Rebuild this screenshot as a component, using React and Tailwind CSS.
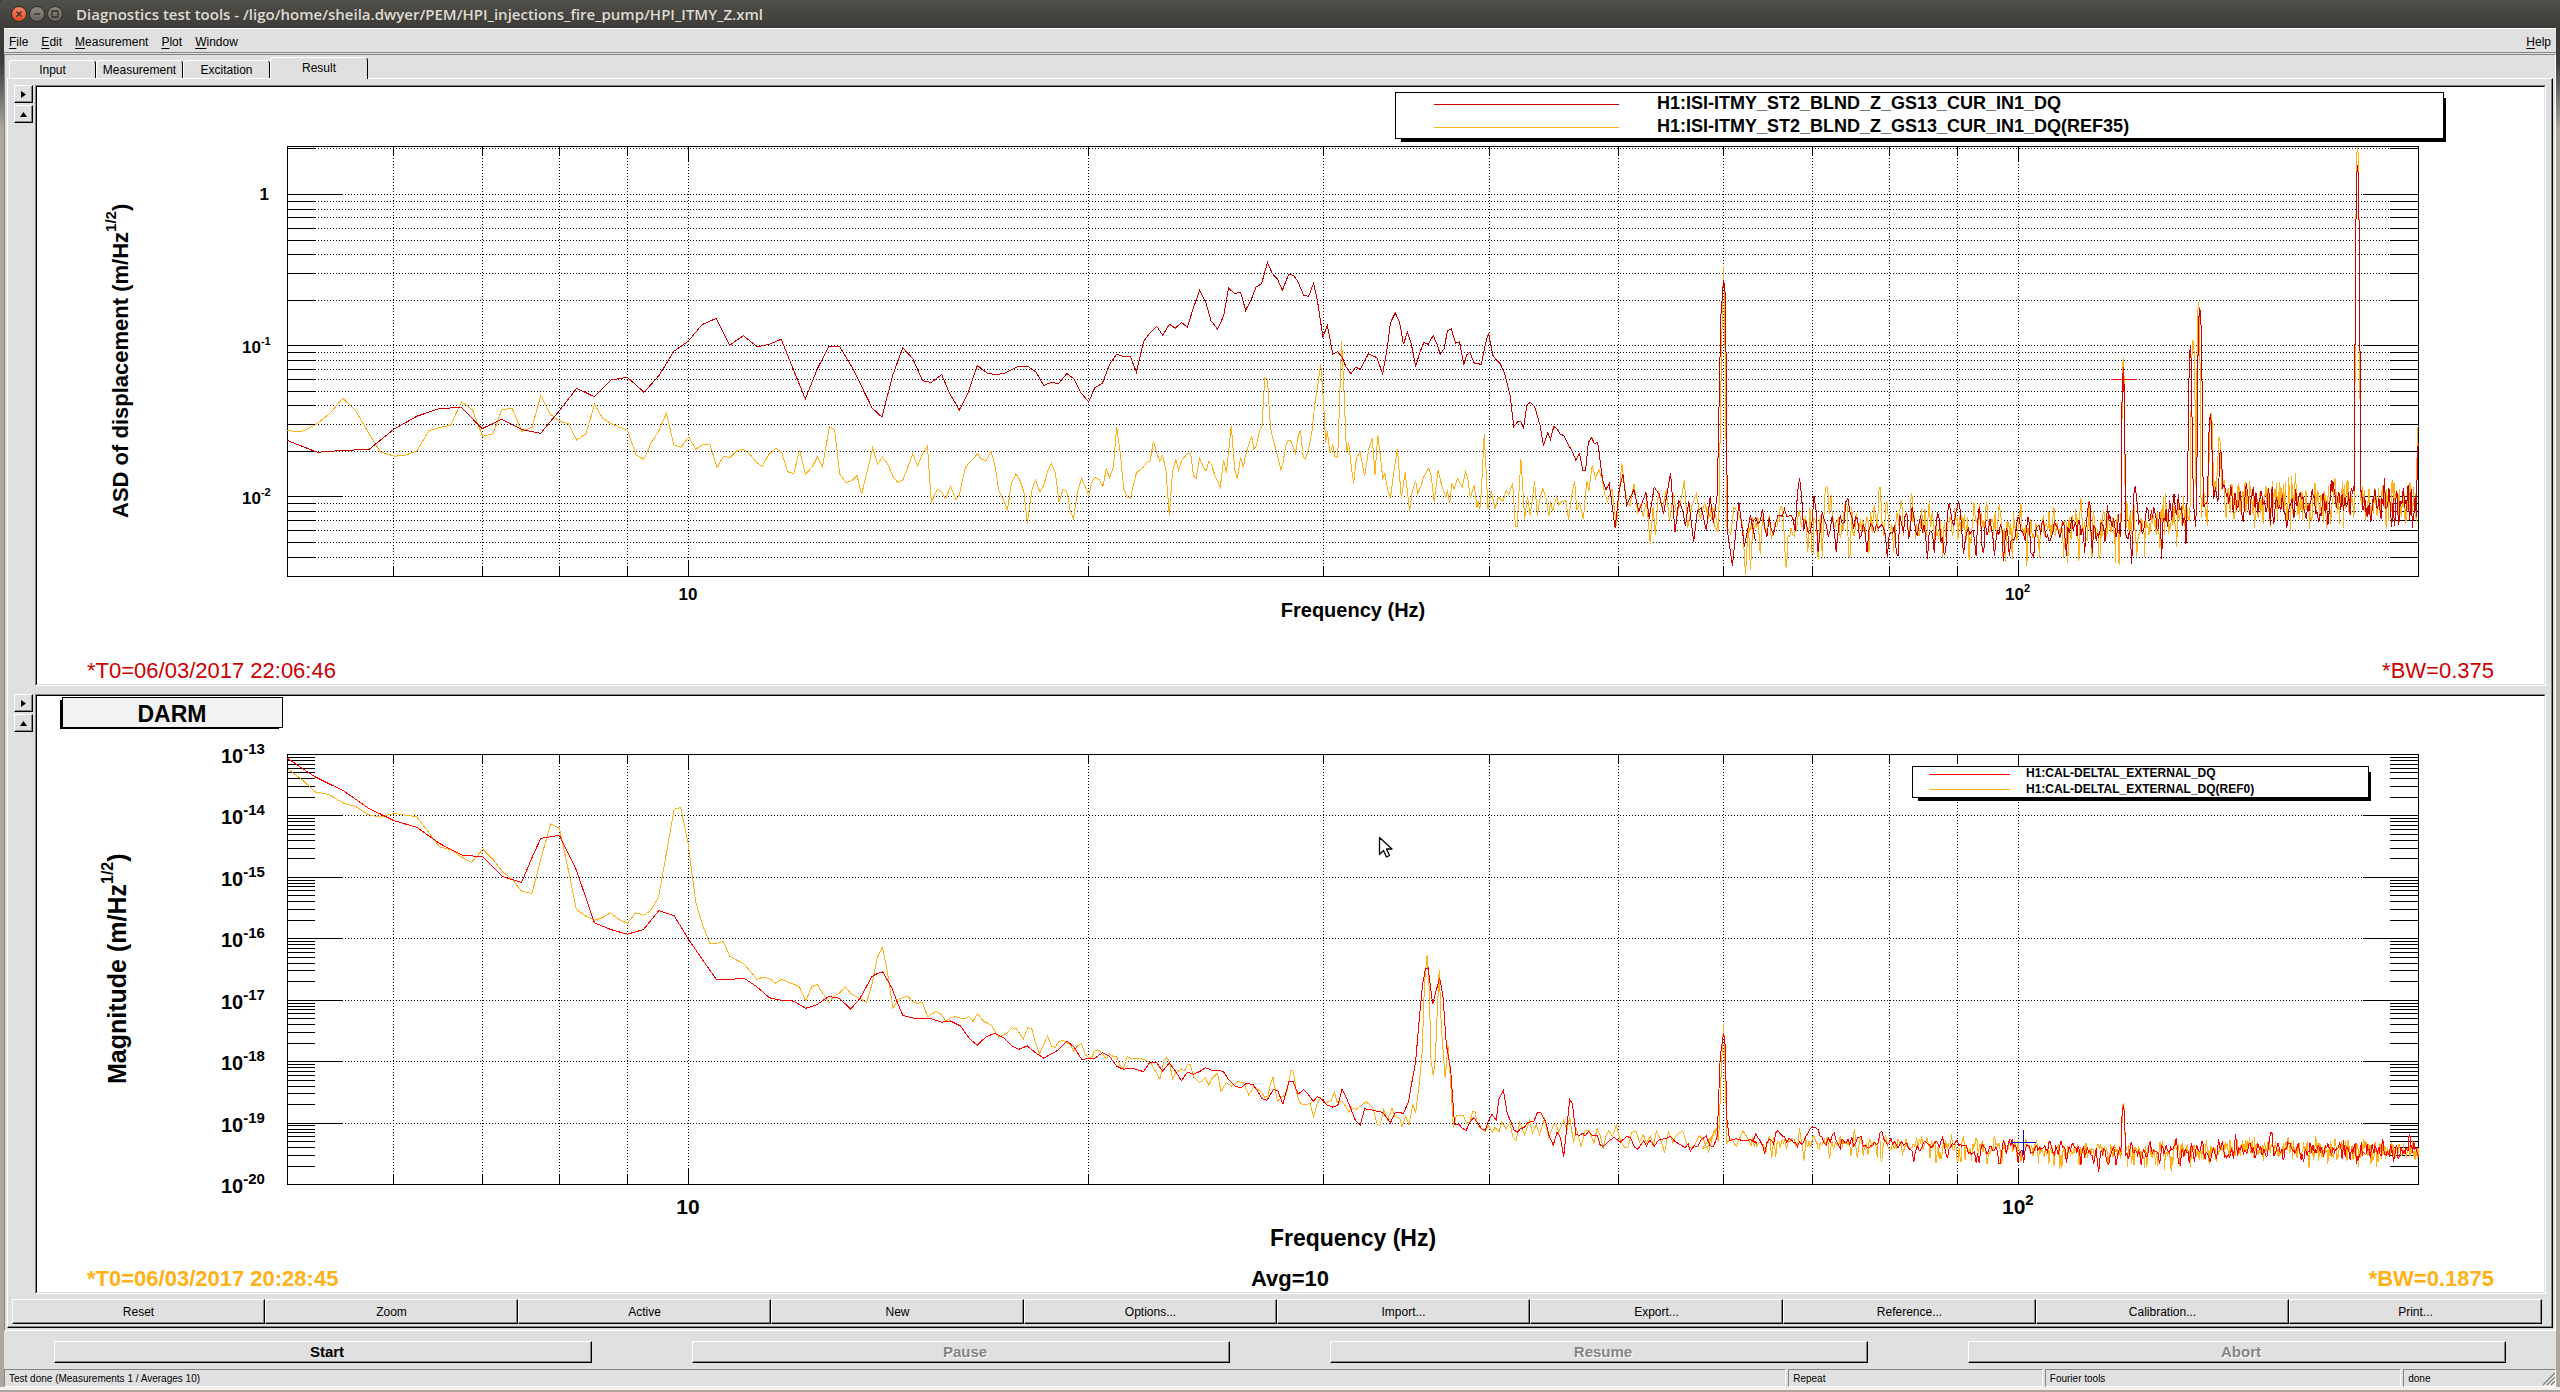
import React from "react";

const BLACK = "#000000";
const ORANGE = "#ffb117";

// Logarithmic frequency axis, 5 Hz to 200 Hz
const LEFT = 287;
const RIGHT = 2418;
const xOf = (f) => 688 + 1330 * Math.log10(f / 10);
const X_TICKS = [6, 7, 8, 9, 10, 20, 30, 40, 50, 60, 70, 80, 90, 100];

// A trace is stored in tiles, each with its own origin and scale
const tile = (x0, y0, sx, sy, points) =>
  points
    .trim()
    .split(/\s+/)
    .map((pair) => {
      const [x, y] = pair.split(",").map(Number);
      return [x0 + x * sx, y0 + y * sy];
    });

const W = 860 / 1568;

// Small seeded generator, so the noise floor is the same on every render
const makeRandom = (seed) => {
  let s = seed;
  return () => {
    s = (s * 1664525 + 1013904223) % 4294967296;
    return s / 4294967296;
  };
};

const interpolate = (anchors, f) => {
  for (let i = 1; i < anchors.length; i++) {
    const [f0, y0] = anchors[i - 1];
    const [f1, y1] = anchors[i];
    if (f <= f1) return y0 + ((y1 - y0) * (f - f0)) / (f1 - f0);
  }
  return anchors[anchors.length - 1][1];
};

// Noise floor with lines on top of it, one sample for each frequency bin.
// Neighbouring bins are correlated, as they are after windowing.
const noiseFloor = ({ seed, from, step, anchors, spread, peaks, max }) => {
  const random = makeRandom(seed);
  const draw = () => random() + random() + random() + random() - 2;
  const points = [];
  let previous = draw();
  for (let f = from; f <= 200; f += step) {
    const current = draw();
    const gauss = 0.8 * current + 0.6 * previous;
    previous = current;
    let y = interpolate(anchors, f) + gauss * 1.5 * spread;
    if (gauss > 0.8 && f < 135) y += spread * 0.8;
    peaks.forEach(([fp, top, width]) => {
      const t = Math.abs(f - fp) / width;
      if (t < 1) y = Math.min(y, top + (y - top) * Math.pow(t, 2.5));
    });
    points.push([xOf(f), Math.min(y, max)]);
  }
  return points;
};

const FLOOR_1 = [
  [60, 527], [75, 524], [90, 527], [105, 528], [120, 528], [130, 518],
  [138, 508], [142, 488], [148, 503], [170, 505], [178, 498], [186, 502], [196, 506], [200, 496],
];
const FLOOR_2 = [
  [60, 1141], [80, 1143], [100, 1150], [120, 1152], [150, 1150], [180, 1150], [200, 1153],
];

const ISI_RED = [
  ...tile(0, 130, 900 / 1568, 1 / 3, `
    500,931 553,967 592,962 643,958 686,898 726,859 765,836 804,832 840,896 874,868 910,899 942,910
    974,843 1005,775 1035,800 1065,750 1093,742 1122,787 1148,737 1174,664 1199,634 1223,584 1248,565
    1271,646 1295,617 1319,650 1340,643 1361,628 1403,807 1425,713 1444,650 1463,650 1485,713`),
  ...tile(860, 80, W, 1 / 2.8, `
    22,918 30,930 40,944 60,825 78,750 96,780 114,842 130,847 149,825 163,876 181,924 197,876 214,799
    232,821 248,825 264,821 289,802 306,802 321,818 335,855 349,847 362,850 377,822 390,836 402,874
    417,902 428,862 442,849 455,796 468,768 480,774 493,775 504,818 517,732 529,708 541,690 552,715
    564,684 575,695 586,679 597,692 606,647 619,589 630,620 640,674 652,698 663,661 672,583 683,598
    694,594 703,645 714,612 722,580 732,571 743,511 752,542 761,557 770,589 782,543 790,547 798,563
    809,603 818,606 827,569 834,617 844,720 852,687 862,767 871,761 879,776 886,803 895,822 904,804
    912,810 927,767 942,777 953,822 961,753 967,680 976,652 984,680 991,740 998,706 1005,737 1013,802
    1021,762 1028,735 1036,740 1045,715 1052,740 1058,768 1065,752 1071,703 1078,697 1086,737 1093,733
    1101,797 1106,770 1112,763 1120,793 1133,796 1140,740 1146,708 1154,771 1161,785 1167,794 1175,820
    1185,880 1192,970 1200,955 1205,957 1210,975 1216,910 1222,903 1230,914 1240,968 1246,1023 1254,988
    1259,1006 1265,970 1271,977 1277,992 1283,995 1291,1020 1298,1038 1305,1064 1312,1046 1318,1094
    1323,1093 1328,1015 1334,1001 1339,1018 1345,1014 1354,1120 1360,1147 1366,1130 1371,1190 1377,1255
    1384,1150 1391,1103 1398,1190 1411,1147 1420,1208 1433,1155 1439,1228 1448,1140 1457,1160 1465,1215
    1478,1101 1486,1265 1493,1177 1500,1205 1505,1250 1511,1180 1520,1293 1527,1205 1534,1198 1543,1262
    1550,1167 1556,1240 1563,1160`),
  ...tile(1700, 80, W, 620 / 1568, `
    36,740 38,600 43,505 46,540 48,740 50,1140 59,1228 71,1068 81,1180 92,1100 101,1165`),
  ...noiseFloor({
    seed: 11, from: 63, step: 0.25, anchors: FLOOR_1, spread: 12, max: 570,
    peaks: [
      [68.5, 478, 0.4], [120, 367, 0.5], [122.5, 486, 0.4], [134.75, 345, 0.6], [137, 308, 0.8],
      [139.5, 414, 0.6], [142, 450, 0.5], [180, 165, 1], [200, 443, 0.6],
    ],
  }),
];

const ISI_REF = [
  ...tile(0, 130, 900 / 1568, 1 / 3, `
    500,902 526,905 551,883 575,850 597,805 619,840 643,912 663,966 688,979 707,975 726,963 747,902
    765,893 785,886 804,815 823,840 841,919 859,911 874,840 892,834 909,904 927,892 942,797 958,851
    974,873 990,881 1005,930 1021,911 1036,823 1050,865 1065,881 1093,901 1108,975 1122,988 1134,940
    1148,902 1161,850 1174,945 1186,952 1200,921 1212,958 1225,943 1237,944 1249,1012 1260,980 1272,982
    1284,962 1295,958 1307,974 1318,997 1328,1009 1339,974 1352,955 1362,968 1372,1025 1383,1031
    1393,959 1403,1033 1415,1011 1424,981 1433,1010 1445,890 1454,898 1463,1032 1474,1058 1484,1052
    1493,1036`),
  ...tile(860, 80, W, 1 / 2.8, `
    3,1160 14,1090 23,1031 32,1074 41,1056 50,1073 60,1110 69,1127 78,1120 96,1048 105,1080 114,1046
    123,1025 130,1183 141,1146 149,1152 156,1172 165,1137 175,1175 181,1162 191,1090 197,1076 206,1062
    214,1046 221,1062 230,1065 239,1040 246,1078 253,1150 261,1173 269,1203 276,1130 284,1103 291,1118
    299,1155 305,1240 314,1145 320,1120 328,1153 335,1135 342,1095 349,1073 356,1100 363,1182 370,1147
    377,1152 383,1205 389,1228 397,1150 404,1116 411,1140 417,1164 422,1128 428,1113 436,1118 443,1138
    449,1088 455,1115 462,1082 468,972 475,1050 481,1145 487,1168 493,1171 504,1100 517,1083 523,1070
    529,1067 535,1011 541,1045 547,1068 552,1052 558,1095 564,1219 570,1095 576,1062 581,1093 586,1067
    597,1045 603,1046 608,1110 613,1115 619,1058 625,1082 631,1095 636,1068 641,1078 647,1107 657,1141
    663,1064 668,1099 677,968 683,1089 688,1118 694,1056 699,1084 703,1050 714,997 718,1033 723,1024
    728,985 733,970 738,834 743,838 748,968 752,1000 758,1033 762,1056 767,1090 771,1075 776,1025
    781,1008 785,1008 794,1046 799,998 803,981 808,1056 812,1062 818,1033 824,985 829,910 834,860
    840,795 845,900 849,1015 852,984 857,1043 862,1022 866,1055 871,1056 878,731 882,860 887,1045
    891,1016 896,1085 900,1130 905,1058 912,1043 920,1110 928,1030 934,1003 939,1105 944,995 949,1055
    953,1115 957,1102 962,1148 967,1171 974,1090 980,1034 987,1170 994,1099 1002,1207 1007,1152
    1013,1122 1017,1158 1023,1135 1028,1111 1037,1087 1041,1105 1047,1182 1054,1092 1059,1125 1068,1170
    1071,1148 1075,1187 1079,1129 1083,1145 1090,1115 1098,1140 1104,1097 1108,1115 1113,1170 1120,1133
    1125,1197 1127,1180 1130,1204 1133,1150 1138,991 1142,1110 1145,1200 1151,1150 1158,1200 1164,1168
    1172,1180 1178,1150 1183,1160 1190,1130 1195,1250 1198,1250 1205,1061 1212,1228 1217,1165 1222,1220
    1230,1124 1235,1220 1240,1170 1245,1145 1251,1170 1256,1222 1259,1180 1263,1207 1270,1166 1274,1190
    1280,1180 1287,1178 1292,1231 1298,1160 1303,1124 1307,1205 1312,1185 1319,1230 1325,1122 1329,1150
    1335,1079 1341,1115 1347,1092 1353,1115 1358,1160 1363,1180 1371,1145 1379,1250 1389,1073 1396,1160
    1404,1192 1411,1130 1418,1210 1423,1190 1428,1222 1434,1180 1441,1298 1446,1195 1450,1273 1456,1150
    1463,1200 1470,1147 1476,1238 1483,1160 1489,1215 1496,1185 1503,1120 1509,1255 1516,1195 1525,1158
    1532,1230 1540,1183 1547,1230 1553,1190 1558,1250 1564,1265`),
  ...tile(1700, 80, W, 620 / 1568, `
    8,1070 16,1105 26,1085 34,1140 39,700 42,520 43,470 44,520 46,700 49,1130 56,1150 62,1080 70,1095
    78,1130 83,1253 88,1120 92,1240 97,1110`),
  ...noiseFloor({
    seed: 29, from: 62.75, step: 0.125, anchors: FLOOR_1, spread: 13, max: 574,
    peaks: [
      [71.8, 486, 0.3], [78.7, 486, 0.3], [120, 358, 0.4], [135.4, 341, 0.7], [136.7, 302, 0.6],
      [139.7, 413, 0.6], [141.7, 437, 0.5], [180, 147, 0.9], [200, 426, 0.6],
    ],
  }),
];

const DARM_RED = [
  ...tile(0, 640, W, 660 / 1568, `
    524,281 573,324 627,359 671,399 718,429 760,445 802,484 842,511 880,515 916,562 951,576 970,517
    986,471 1020,464 1051,547 1084,672 1114,688 1144,699 1173,688 1201,643 1229,655 1255,710 1281,760
    1306,806 1331,806 1357,804 1380,824 1403,850 1425,856 1447,858 1469,875 1490,866 1511,847 1530,851
    1551,877`),
  ...tile(860, 700, W, 600 / 1568, `
    0,780 22,722 30,716 41,710 58,752 67,786 78,824 96,831 126,831 149,842 165,839 183,852 200,886
    214,902 230,880 246,871 262,883 276,903 289,913 305,904 320,922 335,936 360,916 377,892 390,906
    404,939 428,936 442,922 455,931 468,957 480,965 495,962 517,971 529,946 541,948 552,970 564,948
    575,970 586,995 597,973 608,978 619,971 630,961 640,967 655,968 663,972 672,992 683,1008 694,1014
    705,1001 717,1006 725,1022 733,1042 742,1046 754,1018 762,1022 771,1056 782,997 790,998 799,1030
    809,1018 818,1032 827,1049 834,1036 843,1045 852,1059 862,1064 871,1060 879,1017 887,1040 895,1068
    903,1098 912,1111 920,1068 935,1072 953,1078 967,1105 976,1077 991,1080 1000,1050 1006,1000
    1013,946 1020,830 1026,740 1031,703 1036,700 1044,795 1050,762 1057,726 1063,775 1069,900 1077,967
    1084,1108 1091,1108 1099,1120 1105,1125 1112,1103 1119,1091 1127,1107 1134,1122 1140,1124 1146,1100
    1152,1083 1160,1097 1165,1042 1173,1020 1180,1080 1188,1107 1193,1125 1199,1129 1205,1119 1211,1118
    1217,1105 1229,1100 1235,1078 1241,1078 1250,1102 1257,1142 1264,1163 1271,1129 1277,1143 1283,1193
    1290,1100 1294,1043 1299,1056 1305,1135 1311,1138 1318,1132 1322,1140 1328,1127 1335,1137 1344,1137
    1350,1165 1356,1166 1366,1152 1375,1143 1386,1156 1398,1140 1405,1145 1412,1168 1418,1174 1429,1152
    1434,1165 1440,1150 1448,1166 1456,1150 1473,1144 1478,1140 1486,1154 1498,1164 1504,1170 1510,1160
    1514,1179 1521,1165 1527,1168 1534,1148 1543,1140 1550,1165 1556,1168 1563,1140 1567,980`),
  ...tile(1700, 680, W, 620 / 1568, `
    37,950 43,893 46,925 49,1110 54,1165 66,1160 78,1165 92,1163 104,1172`),
  ...noiseFloor({
    seed: 5, from: 63.25, step: 0.25, anchors: FLOOR_2, spread: 6, max: 1172,
    peaks: [[70.2, 1127, 0.8], [120, 1105, 0.5], [155, 1132, 0.6], [197, 1134, 0.5]],
  }),
];

const DARM_REF = [
  ...tile(0, 640, W, 660 / 1568, `
    524,306 548,329 575,361 600,367 627,388 648,395 672,415 694,421 718,412 740,416 760,420 782,458
    802,492 822,498 842,516 860,528 880,497 900,523 916,550 935,570 951,597 970,602 986,520 1004,437
    1020,447 1036,545 1051,640 1068,656 1084,666 1098,660 1113,648 1130,665 1144,673 1159,648 1174,654
    1187,642 1201,610 1216,500 1229,402 1241,398 1255,485 1268,620 1281,678 1294,720 1306,721 1319,716
    1331,752 1357,770 1380,806 1391,801 1403,804 1414,815 1425,806 1447,818 1457,823 1469,858 1480,824
    1490,818 1511,862 1520,846 1530,840 1541,824 1551,840`),
  ...tile(860, 700, W, 600 / 1568, `
    0,780 12,790 22,742 32,670 41,646 50,710 60,806 69,784 78,778 87,774 96,788 105,793 114,790
    123,828 138,814 147,820 157,840 165,830 173,827 190,834 198,827 206,840 214,819 224,838 239,849
    253,881 268,871 277,857 284,858 298,885 306,857 313,858 320,895 327,925 335,900 342,877 349,905
    356,908 363,892 370,890 383,900 390,918 397,903 404,899 411,928 418,935 423,932 429,915 436,916
    449,938 455,925 462,932 468,932 474,955 481,962 487,932 493,936 504,936 517,939 530,948 547,991
    553,950 559,934 564,945 570,990 575,975 586,964 591,970 597,954 602,952 608,985 619,999 624,995
    630,988 636,1007 641,990 647,981 652,977 658,1022 668,1000 677,1009 689,997 699,1000 709,1033
    718,1010 732,1025 738,1038 744,1035 748,1005 753,986 761,1048 772,1035 777,1032 786,967 790,970
    795,1020 801,1050 807,1058 821,1055 827,1091 834,1052 840,1040 849,1053 859,1046 865,1025 870,1051
    879,1050 886,1062 891,1077 896,1066 904,1070 912,1062 923,1050 935,1065 943,1108 948,1112 955,1070
    962,1098 970,1067 975,1088 984,1093 988,1115 995,1088 1001,1110 1008,1057 1013,1080 1020,1000
    1025,920 1029,745 1034,667 1038,760 1041,940 1045,982 1049,940 1052,830 1056,707 1060,860 1067,988
    1072,903 1077,1000 1082,1118 1087,1087 1100,1086 1106,1107 1112,1102 1117,1075 1121,1075 1126,1110
    1131,1118 1140,1128 1146,1112 1153,1130 1158,1117 1165,1128 1170,1103 1178,1120 1185,1105 1190,1140
    1196,1153 1203,1103 1212,1137 1221,1098 1226,1132 1233,1110 1239,1135 1248,1095 1256,1145 1264,1110
    1269,1107 1274,1130 1283,1098 1289,1125 1294,1090 1301,1158 1306,1120 1315,1167 1322,1125 1330,1125
    1338,1158 1344,1120 1350,1140 1355,1172 1360,1140 1365,1125 1372,1140 1379,1112 1386,1150 1393,1168
    1400,1170 1407,1130 1415,1127 1421,1155 1428,1135 1434,1158 1441,1140 1447,1165 1452,1125 1460,1150
    1467,1183 1474,1128 1482,1155 1489,1135 1500,1127 1508,1160 1516,1172 1523,1160 1530,1138 1538,1150
    1547,1180 1553,1150 1558,1124 1566,1115`),
  ...tile(1700, 680, W, 620 / 1568, `
    4,1185 14,1180 26,1140 34,1168 39,980 43,868 46,980 49,1170 58,1160 66,1180 78,1140 90,1165`),
  ...noiseFloor({
    seed: 77, from: 62.5, step: 0.125, anchors: FLOOR_2, spread: 6, max: 1173,
    peaks: [[120, 1103, 0.4]],
  }),
];

function Trace({ points, color }) {
  return (
    <polyline
      points={points.map(([x, y]) => `${x.toFixed(1)},${y.toFixed(1)}`).join(" ")}
      fill="none"
      stroke={color}
      shapeRendering="crispEdges"
    />
  );
}

function Axes({ top, bottom, major, minor, minorGrid }) {
  return (
    <g stroke={BLACK} shapeRendering="crispEdges">
      {X_TICKS.map((f) => {
        const x = Math.round(xOf(f)) + 0.5;
        const len = f === 10 || f === 100 ? 16 : 9;
        return (
          <g key={f}>
            <line x1={x} x2={x} y1={top} y2={bottom} strokeDasharray="1 2" />
            <line x1={x} x2={x} y1={top} y2={top + len} />
            <line x1={x} x2={x} y1={bottom - len} y2={bottom} />
          </g>
        );
      })}
      {[...major, ...minor].map((v, i) => {
        const y = Math.round(v) + 0.5;
        const isMajor = i < major.length;
        const len = isMajor ? 55 : 28;
        return (
          <g key={v}>
            {(isMajor || minorGrid) && (
              <line x1={LEFT + len} x2={RIGHT - len} y1={y} y2={y} strokeDasharray="1 2" />
            )}
            <line x1={LEFT} x2={LEFT + len} y1={y} y2={y} />
            <line x1={RIGHT - len} x2={RIGHT} y1={y} y2={y} />
          </g>
        );
      })}
      <rect x={LEFT + 0.5} y={top + 0.5} width={RIGHT - LEFT} height={bottom - top} fill="none" />
    </g>
  );
}

function Power({ x, y, exp, size, supSize, rise }) {
  return (
    <text x={x} y={y} fontSize={size}>
      10
      <tspan dy={-rise} fontSize={supSize}>{exp}</tspan>
    </text>
  );
}

function Legend({ x, y, width, height, lineX, lineWidth, textX, size, rows }) {
  return (
    <g>
      <rect x={x + 6} y={y + 6} width={width - 3} height={height - 2} fill={BLACK} />
      <rect x={x + 0.5} y={y + 0.5} width={width} height={height} fill="#fff" stroke={BLACK} />
      {rows.map((row) => (
        <g key={row.label}>
          <line x1={lineX} x2={lineX + lineWidth} y1={row.y} y2={row.y} stroke={row.color} shapeRendering="crispEdges" />
          <text x={textX} y={row.textY} fontSize={size}>{row.label}</text>
        </g>
      ))}
    </g>
  );
}

const chartClass = "block w-full h-auto bg-white font-['Liberation_Sans',Arial,sans-serif] font-bold";

const DECADE_1 = 151.2;
const yAsd = (v) => 194 - DECADE_1 * Math.log10(v);
const ASD_MAJOR = [1, 0.1, 0.01].map(yAsd);
const ASD_MINOR = [
  2,
  ...[9, 8, 7, 6, 5, 4, 3, 2].map((n) => n / 10),
  ...[9, 8, 7, 6, 5, 4, 3, 2].map((n) => n / 100),
  ...[9, 8, 7, 6, 5, 4].map((n) => n / 1000),
].map(yAsd);

function AsdChart() {
  return (
    <svg viewBox="37 87 2507 597" className={chartClass} role="img" aria-label="ASD of displacement">
      <Axes top={146} bottom={576} major={ASD_MAJOR} minor={ASD_MINOR} minorGrid />
      <Trace points={ISI_REF} color={ORANGE} />
      <Trace points={ISI_RED} color="#cc0000" />
      <path d="M2111 379.5h26M2123.5 367v25" stroke="#ff0000" shapeRendering="crispEdges" />

      <Legend
        x={1395} y={92} width={1048} height={46} lineX={1434} lineWidth={185} textX={1657} size={18}
        rows={[
          { label: "H1:ISI-ITMY_ST2_BLND_Z_GS13_CUR_IN1_DQ", color: "#cc0000", y: 104.5, textY: 109 },
          { label: "H1:ISI-ITMY_ST2_BLND_Z_GS13_CUR_IN1_DQ(REF35)", color: ORANGE, y: 127.5, textY: 132 },
        ]}
      />

      <text x="269" y="200" fontSize="17" textAnchor="end">1</text>
      <Power x={242} y={353} exp="-1" size={17} supSize={11} rise={8} />
      <Power x={242} y={504} exp="-2" size={17} supSize={11} rise={8} />
      <text x="688" y="600" fontSize="17" textAnchor="middle">10</text>
      <Power x={2005} y={600} exp="2" size={17} supSize={11} rise={8} />

      <text x="1353" y="617" fontSize="20" textAnchor="middle">Frequency (Hz)</text>
      <text transform="translate(128 518) rotate(-90)" fontSize="22">
        ASD of displacement (m/Hz
        <tspan dy="-12" fontSize="15">1/2</tspan>
        <tspan dy="12">)</tspan>
      </text>
      <g className="font-normal" fontSize="22" fill="#cc0000">
        <text x="87" y="678">*T0=06/03/2017 22:06:46</text>
        <text x="2494" y="678" textAnchor="end">*BW=0.375</text>
      </g>
    </svg>
  );
}

const DECADE_2 = 430 / 7;
const EXPONENTS = [-13, -14, -15, -16, -17, -18, -19, -20];
const yDarm = (exp) => 754 + (-13 - exp) * DECADE_2;
const DARM_MINOR = EXPONENTS.slice(1).flatMap((e) =>
  [2, 3, 4, 5, 6, 7, 8, 9].map((n) => yDarm(e + Math.log10(n)))
);

function DarmChart() {
  return (
    <svg viewBox="37 696 2507 596" className={chartClass} role="img" aria-label="DARM magnitude">
      <Axes top={754} bottom={1184} major={EXPONENTS.slice(1, 7).map(yDarm)} minor={DARM_MINOR} />
      <Trace points={DARM_REF} color={ORANGE} />
      <Trace points={DARM_RED} color="#ff0000" />
      <path d="M2011 1142.5h25M2023.5 1130v25" stroke="#0000ff" shapeRendering="crispEdges" />

      <rect x="60" y="700" width="219" height="29" fill={BLACK} />
      <rect x="62.5" y="697.5" width="220" height="30" fill="#f2f2f2" stroke={BLACK} />
      <text x="172" y="722" fontSize="23" textAnchor="middle">DARM</text>

      <Legend
        x={1912} y={766} width={456} height={31} lineX={1929} lineWidth={81} textX={2026} size={12}
        rows={[
          { label: "H1:CAL-DELTAL_EXTERNAL_DQ", color: "#ff0000", y: 774.5, textY: 777 },
          { label: "H1:CAL-DELTAL_EXTERNAL_DQ(REF0)", color: ORANGE, y: 789.5, textY: 793 },
        ]}
      />

      {EXPONENTS.map((e) => (
        <Power key={e} x={221} y={Math.round(yDarm(e)) + 9} exp={e} size={20} supSize={15} rise={9} />
      ))}
      <text x="688" y="1214" fontSize="21" textAnchor="middle">10</text>
      <Power x={2002} y={1214} exp="2" size={21} supSize={15} rise={9} />

      <text x="1353" y="1246" fontSize="23" textAnchor="middle">Frequency (Hz)</text>
      <text transform="translate(126 1084) rotate(-90)" fontSize="25">
        Magnitude (m/Hz
        <tspan dy="-13" fontSize="16">1/2</tspan>
        <tspan dy="13">)</tspan>
      </text>
      <text x="1290" y="1286" fontSize="22" textAnchor="middle">Avg=10</text>
      <g fontSize="22" fill={ORANGE}>
        <text x="87" y="1286">*T0=06/03/2017 20:28:45</text>
        <text x="2494" y="1286" textAnchor="end">*BW=0.1875</text>
      </g>

      {/* mouse pointer */}
      <path
        d="M1379.5 837.5v17l4-4 3 6.500 3-1.500-3-6.500h5.500z"
        fill="#fff"
        stroke="#000"
        strokeWidth="1.3"
        strokeLinejoin="round"
      />
    </svg>
  );
}

const raised =
  "border border-t-white border-l-white border-r-black border-b-black shadow-[inset_-1px_-1px_0_#848484]";

function WindowButton({ label, close, children }) {
  return (
    <button
      aria-label={label}
      className={`w-4 h-4 rounded-full border border-[#2f2e2b] flex items-center justify-center ${
        close ? "bg-gradient-to-b from-[#f58460] to-[#e0491b]" : "bg-gradient-to-b from-[#8b897f] to-[#686660]"
      }`}
    >
      <svg viewBox="0 0 14 14" className="w-3.5 h-3.5" fill="none" stroke="#33322e" strokeWidth="1.3">
        {children}
      </svg>
    </button>
  );
}

function MenuItem({ label }) {
  return (
    <button>
      <span className="underline underline-offset-2">{label[0]}</span>
      {label.slice(1)}
    </button>
  );
}

function Pad({ children }) {
  return (
    <div className="flex gap-0.5">
      <div className="flex flex-col gap-0.5">
        <button aria-label="Show options" className={`w-[19px] h-[18px] flex items-center justify-center ${raised}`}>
          <svg viewBox="0 0 5 7" className="w-[5px] h-[7px]"><path d="M0 0l5 3.500-5 3.500z" /></svg>
        </button>
        <button aria-label="Collapse" className={`w-[19px] h-[18px] flex items-center justify-center ${raised}`}>
          <svg viewBox="0 0 7 5" className="w-[7px] h-[5px]"><path d="M0 5l3.500-5 3.500 5z" /></svg>
        </button>
      </div>
      <div className="flex-1 min-w-0 border border-t-[#848484] border-l-[#848484] border-r-white border-b-white">
        <div className="border border-t-black border-l-black border-r-[#e0e0e0] border-b-[#e0e0e0]">{children}</div>
      </div>
    </div>
  );
}

const menus = ["File", "Edit", "Measurement", "Plot", "Window"];
const tabs = ["Input", "Measurement", "Excitation", "Result"];
const plotActions = [
  "Reset", "Zoom", "Active", "New", "Options...", "Import...", "Export...", "Reference...", "Calibration...", "Print...",
];
const runActions = ["Start", "Pause", "Resume", "Abort"];

export default function App() {
  const activeTab = "Result";
  const cell = "border border-t-[#848484] border-l-[#848484] border-r-white border-b-white px-1 leading-[18px] truncate";

  return (
    <div className="min-h-screen flex flex-col bg-gradient-to-b from-[#3c3b37] from-[60px] to-[#aea79f] to-[130px] text-black text-xs font-['Liberation_Sans',Arial,sans-serif]">
      {/* Title bar */}
      <header className="h-7 pl-[11px] flex items-center gap-0.5 bg-gradient-to-b from-[#504f49] to-[#3d3c38] rounded-tl">
        <WindowButton label="Close" close><path d="M4.500 4.500l5 5M9.500 4.500l-5 5" /></WindowButton>
        <WindowButton label="Minimize"><path d="M4 7h6" /></WindowButton>
        <WindowButton label="Maximize"><path d="M4 4h6v6h-6z" /></WindowButton>
        <h1 className="ml-[11px] text-[15px] leading-5 font-semibold text-[#dfdbd2] font-['Open_Sans',sans-serif] whitespace-nowrap">
          Diagnostics test tools - /ligo/home/sheila.dwyer/PEM/HPI_injections_fire_pump/HPI_ITMY_Z.xml
        </h1>
      </header>

      <div className="mx-1 bg-[#e0e0e0]">
        <nav className="h-[25px] px-[5px] pt-0.5 flex items-center gap-[13px] border-t border-t-white border-b border-b-[#848484]">
          {menus.map((m) => <MenuItem key={m} label={m} />)}
          <div className="flex-1" />
          <MenuItem label="Help" />
        </nav>

        <main className="mt-px border border-t-[#848484] border-l-[#848484] border-r-white border-b-white p-0.5">
          {/* Tabs */}
          <div role="tablist" className="flex items-end pl-0.5 h-[21px]">
            {tabs.map((t) => (
              <button
                key={t}
                role="tab"
                aria-selected={t === activeTab}
                className={
                  t === activeTab
                    ? "relative z-10 w-[98px] h-[22px] -mb-px pb-0.5 rounded-t-sm bg-[#e0e0e0] border-t border-l border-r border-t-white border-l-white border-r-black"
                    : "w-[87px] h-[18px] rounded-t-sm border-t border-l border-r border-t-white border-l-white border-r-black"
                }
              >
                {t}
              </button>
            ))}
          </div>

          {/* Plot pads */}
          <section className={`pt-1.5 pb-[3px] ${raised}`}>
            <div className="px-1.5 flex flex-col gap-2">
              <Pad><AsdChart /></Pad>
              <Pad><DarmChart /></Pad>
            </div>
            <div className="mt-[5px] ml-1 mr-2.5 flex">
              {plotActions.map((a) => (
                <button key={a} className={`flex-1 h-[25px] ${raised}`}>{a}</button>
              ))}
            </div>
          </section>
        </main>

        <div className="px-[50px] pt-2.5 pb-1.5 flex gap-[100px]">
          {runActions.map((a) => (
            <button
              key={a}
              disabled={a !== "Start"}
              className={`flex-1 h-[22px] pl-2 leading-5 text-[15px] font-bold disabled:text-[#848484] disabled:[text-shadow:1px_1px_0_#fff] ${raised}`}
            >
              {a}
            </button>
          ))}
        </div>

        <footer className="h-[18px] flex gap-0.5 text-[10px]">
          <div className={`w-[70%] ${cell}`}>Test done (Measurements 1 / Averages 10)</div>
          <div className={`w-[10%] ${cell}`}>Repeat</div>
          <div className={`w-[14%] ${cell}`}>Fourier tools</div>
          <div className={`w-[6%] flex justify-between ${cell} pr-0`}>
            done
            <svg viewBox="0 0 12 16" className="w-3 h-4" stroke="#848484" strokeWidth="1.5">
              <path d="M0 15L12 3M4 15l8-8M8 15l4-4" />
              <path d="M1.500 15.500L12 5M5.500 15.500L12 9M9.500 15.500L12 13" stroke="#fff" strokeWidth="1" />
            </svg>
          </div>
        </footer>
      </div>
      <div className="h-1 bg-[#f2f1f0] border-b border-b-[#aea79f]" />
    </div>
  );
}
